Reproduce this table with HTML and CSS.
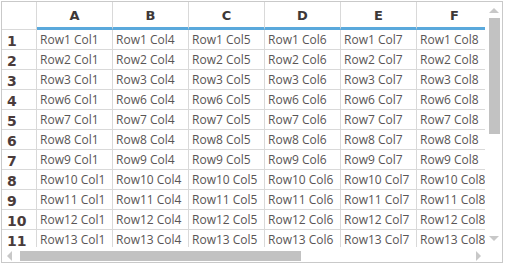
FILE: index.html
```html
<!DOCTYPE html>
<html>
<head>
<meta charset="utf-8">
<link rel="stylesheet" href="styles.css">
</head>
<body>
<div class="grid">
  <div class="viewport">
    <div class="row head">
      <div class="corner"></div>
      <div class="hcell">A</div>
      <div class="hcell">B</div>
      <div class="hcell">C</div>
      <div class="hcell">D</div>
      <div class="hcell">E</div>
      <div class="hcell">F</div>
    </div>
    <div class="row"><div class="rh">1</div><div class="cell">Row1 Col1</div><div class="cell">Row1 Col4</div><div class="cell">Row1 Col5</div><div class="cell">Row1 Col6</div><div class="cell">Row1 Col7</div><div class="cell">Row1 Col8</div></div>
    <div class="row"><div class="rh">2</div><div class="cell">Row2 Col1</div><div class="cell">Row2 Col4</div><div class="cell">Row2 Col5</div><div class="cell">Row2 Col6</div><div class="cell">Row2 Col7</div><div class="cell">Row2 Col8</div></div>
    <div class="row"><div class="rh">3</div><div class="cell">Row3 Col1</div><div class="cell">Row3 Col4</div><div class="cell">Row3 Col5</div><div class="cell">Row3 Col6</div><div class="cell">Row3 Col7</div><div class="cell">Row3 Col8</div></div>
    <div class="row"><div class="rh">4</div><div class="cell">Row6 Col1</div><div class="cell">Row6 Col4</div><div class="cell">Row6 Col5</div><div class="cell">Row6 Col6</div><div class="cell">Row6 Col7</div><div class="cell">Row6 Col8</div></div>
    <div class="row"><div class="rh">5</div><div class="cell">Row7 Col1</div><div class="cell">Row7 Col4</div><div class="cell">Row7 Col5</div><div class="cell">Row7 Col6</div><div class="cell">Row7 Col7</div><div class="cell">Row7 Col8</div></div>
    <div class="row"><div class="rh">6</div><div class="cell">Row8 Col1</div><div class="cell">Row8 Col4</div><div class="cell">Row8 Col5</div><div class="cell">Row8 Col6</div><div class="cell">Row8 Col7</div><div class="cell">Row8 Col8</div></div>
    <div class="row"><div class="rh">7</div><div class="cell">Row9 Col1</div><div class="cell">Row9 Col4</div><div class="cell">Row9 Col5</div><div class="cell">Row9 Col6</div><div class="cell">Row9 Col7</div><div class="cell">Row9 Col8</div></div>
    <div class="row"><div class="rh">8</div><div class="cell">Row10 Col1</div><div class="cell">Row10 Col4</div><div class="cell">Row10 Col5</div><div class="cell">Row10 Col6</div><div class="cell">Row10 Col7</div><div class="cell">Row10 Col8</div></div>
    <div class="row"><div class="rh">9</div><div class="cell">Row11 Col1</div><div class="cell">Row11 Col4</div><div class="cell">Row11 Col5</div><div class="cell">Row11 Col6</div><div class="cell">Row11 Col7</div><div class="cell">Row11 Col8</div></div>
    <div class="row"><div class="rh">10</div><div class="cell">Row12 Col1</div><div class="cell">Row12 Col4</div><div class="cell">Row12 Col5</div><div class="cell">Row12 Col6</div><div class="cell">Row12 Col7</div><div class="cell">Row12 Col8</div></div>
    <div class="row"><div class="rh">11</div><div class="cell">Row13 Col1</div><div class="cell">Row13 Col4</div><div class="cell">Row13 Col5</div><div class="cell">Row13 Col6</div><div class="cell">Row13 Col7</div><div class="cell">Row13 Col8</div></div>
  </div>
  <div class="vscroll">
    <div class="arrow up"></div>
    <div class="vthumb"></div>
    <div class="vspace"></div>
    <div class="arrow down"></div>
  </div>
  <div class="hscroll">
    <div class="arrow left"></div>
    <div class="hthumb"></div>
    <div class="hspace"></div>
    <div class="arrow right"></div>
  </div>
  <div class="corner-box"></div>
</div>
</body>
</html>
```
FILE: styles.css
```css
html, body {
  margin: 0;
  padding: 0;
  background: #fff;
}
.grid {
  margin: 1px;
  width: 500px;
  height: 260px;
  border: 1px solid #c9c9c9;
  display: grid;
  grid-template-columns: 483px 17px;
  grid-template-rows: 245px 15px;
  font-family: "Open Sans", "Noto Sans", sans-serif;
  overflow: hidden;
}
.viewport {
  overflow: hidden;
  width: 483px;
  height: 245px;
}
.row {
  display: grid;
  grid-template-columns: 35px repeat(6, 76px);
  height: 20px;
}
.row.head {
  height: 28px;
}
.corner {
  border-right: 1px solid #d9d9d9;
  border-bottom: 1px solid #d9d9d9;
}
.hcell {
  border-right: 1px solid #d9d9d9;
  border-bottom: 3px solid #5aa9dc;
  font-family: "DejaVu Sans", sans-serif;
  font-weight: bold;
  font-size: 13px;
  color: #3d3838;
  display: flex;
  align-items: center;
  justify-content: center;
  padding-top: 1px;
}
.rh {
  border-right: 1px solid #d9d9d9;
  border-bottom: 1px solid #d9d9d9;
  font-family: "DejaVu Sans", sans-serif;
  font-weight: bold;
  font-size: 14px;
  color: #4a3b3b;
  padding-left: 5px;
  padding-top: 1px;
  line-height: 20px;
  overflow: hidden;
}
.cell {
  border-right: 1px solid #d9d9d9;
  border-bottom: 1px solid #d9d9d9;
  font-size: 12px;
  color: #595555;
  padding-left: 3px;
  line-height: 19px;
  white-space: nowrap;
  overflow: hidden;
}
.vscroll {
  display: flex;
  flex-direction: column;
  align-items: center;
  padding: 6px 0 6px;
}
.vthumb {
  width: 11px;
  height: 116px;
  background: #c2c2c2;
  margin-top: 5px;
  margin-left: 1px;
}
.vspace { flex: 1; }
.hscroll {
  display: flex;
  align-items: center;
  padding: 0 4px 0 5px;
}
.hthumb {
  height: 10px;
  width: 281px;
  background: #c2c2c2;
  margin-left: 8px;
  margin-top: 2px;
}
.hspace { flex: 1; }
.arrow {
  width: 0;
  height: 0;
}
.arrow.up {
  border-left: 5px solid transparent;
  border-right: 5px solid transparent;
  border-bottom: 5px solid #c8c8c8;
}
.arrow.down {
  border-left: 5px solid transparent;
  border-right: 5px solid transparent;
  border-top: 5px solid #c8c8c8;
}
.arrow.left {
  border-top: 5px solid transparent;
  border-bottom: 5px solid transparent;
  border-right: 5px solid #c8c8c8;
  margin-top: 2px;
}
.arrow.right {
  border-top: 5px solid transparent;
  border-bottom: 5px solid transparent;
  border-left: 5px solid #c8c8c8;
  margin-top: 2px;
}
```
